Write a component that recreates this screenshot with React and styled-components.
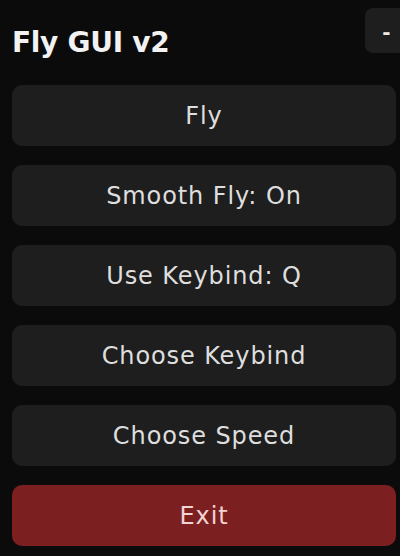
import React from 'react'
import styled, { createGlobalStyle } from 'styled-components'

const GlobalStyle = createGlobalStyle`
  html, body {
    margin: 0;
    padding: 0;
    background: #0b0b0b;
    overflow: hidden;
  }
`

const Panel = styled.div`
  width: 400px;
  height: 556px;
  box-sizing: border-box;
  padding: 8px 4px 0 12px;
  background: #0b0b0b;
  font-family: "DejaVu Sans", "Noto Sans", sans-serif;
  display: flex;
  flex-direction: column;
`

const Header = styled.div`
  display: flex;
  align-items: flex-start;
  justify-content: space-between;
  margin-right: -4px;
`

const Title = styled.h1`
  margin: 21px 0 0 0;
  color: #f2f2f2;
  font-size: 28px;
  line-height: 28px;
  font-weight: 700;
  letter-spacing: -0.3px;
`

const MinButton = styled.button`
  width: 35px;
  height: 45px;
  border: none;
  border-radius: 8px 0 0 8px;
  background: #1e1e1e;
  color: #e8e8e8;
  font-family: inherit;
  font-size: 20px;
  font-weight: 700;
  padding: 3px 0 0 8px;
`

const List = styled.div`
  margin-top: 28px;
  display: flex;
  flex-direction: column;
  gap: 19px;
`

const ActionButton = styled.button`
  height: 61px;
  width: 100%;
  border: none;
  border-radius: 10px;
  background: ${(p) => (p.$danger ? '#7c1f20' : '#1e1e1e')};
  color: ${(p) => (p.$danger ? '#f0d4d4' : '#dedede')};
  font-family: inherit;
  font-size: 24px;
  letter-spacing: 0.9px;
  font-weight: 400;
  padding: 0;
`

const items = ['Fly', 'Smooth Fly: On', 'Use Keybind: Q', 'Choose Keybind', 'Choose Speed']

export default function App() {
  return (
    <>
      <GlobalStyle />
      <Panel>
        <Header>
          <Title>Fly GUI v2</Title>
          <MinButton>-</MinButton>
        </Header>
        <List>
          {items.map((label) => (
            <ActionButton key={label}>{label}</ActionButton>
          ))}
          <ActionButton $danger>Exit</ActionButton>
        </List>
      </Panel>
    </>
  )
}
